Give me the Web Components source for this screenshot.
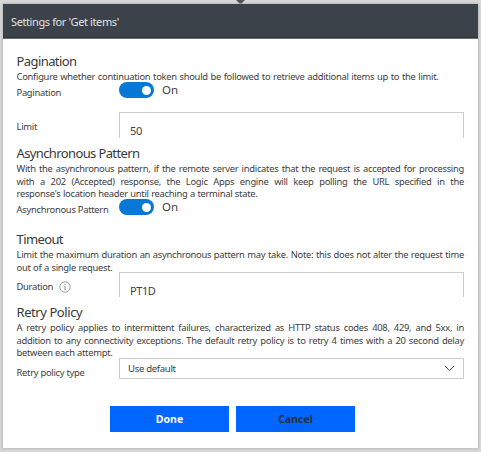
<!DOCTYPE html>
<html lang="en"><head><meta charset="utf-8"><title>Settings for 'Get items'</title>
<style>
html,body{margin:0;height:100%;overflow:hidden}
body{background:#d8d8d8;color:#404040;font-family:"Noto Sans","Open Sans",sans-serif}
text-line + field-row{margin-top:-1.6px}
</style></head><body>
<settings-dialog heading="Settings for 'Get items'">
 <settings-section heading="Pagination" style="height:92px;--hs:-.58px">
  <text-line style="width:422px">Configure whether continuation token should be followed to retrieve additional items up to the limit.</text-line>
  <field-row label="Pagination" style="height:30px;--ly:10.5px"><toggle-switch></toggle-switch></field-row>
  <field-row label="Limit" style="height:26px;--ly:15px"><text-box>50</text-box></field-row>
 </settings-section>
 <settings-section heading="Asynchronous Pattern" style="height:86px;--hs:-.62px">
  <text-line>With the asynchronous pattern, if the remote server indicates that the request is accepted for processing</text-line>
  <text-line>with a 202 (Accepted) response, the Logic Apps engine will keep polling the URL specified in the</text-line>
  <text-line style="width:241px">response's location header until reaching a terminal state.</text-line>
  <field-row label="Asynchronous Pattern" style="height:17px;--ly:11px"><toggle-switch></toggle-switch></field-row>
 </settings-section>
 <settings-section heading="Timeout" style="height:73px;--hs:-.6px">
  <text-line>Limit the maximum duration an asynchronous pattern may take. Note: this does not alter the request time</text-line>
  <text-line style="width:96px">out of a single request.</text-line>
  <field-row label="Duration" info style="margin-top:-2.2px;height:25px;--ly:15px"><text-box style="height:25px">PT1D</text-box></field-row>
 </settings-section>
 <settings-section heading="Retry Policy" style="height:102px;--hs:-.43px">
  <text-line>A retry policy applies to intermittent failures, characterized as HTTP status codes 408, 429, and 5xx, in</text-line>
  <text-line>addition to any connectivity exceptions. The default retry policy is to retry 4 times with a 20 second delay</text-line>
  <text-line style="width:96px">between each attempt.</text-line>
  <field-row label="Retry policy type" style="height:21px;--ly:14.5px"><select-box>Use default</select-box></field-row>
 </settings-section>
 <action-button slot="actions">Done</action-button>
 <action-button slot="actions" style="color:#2a3038">Cancel</action-button>
</settings-dialog>
<script>
const define=(name,html,setup)=>customElements.define(name,class extends HTMLElement{
  connectedCallback(){
    if(this.shadowRoot)return;
    this.attachShadow({mode:'open'}).innerHTML=html;
    if(setup)setup(this,this.shadowRoot);
  }
});
define('settings-dialog',`<style>
:host{display:block;position:relative;height:452px;box-sizing:border-box;padding:4px 3px}
.tip{position:absolute;left:236px;top:0}
.card{height:444px;background:#fff;box-shadow:0 0 2px 1px #bbb;display:flex;flex-direction:column}
header{height:35px;box-sizing:border-box;flex:none;background:#3b424a;color:#e0e2e4;border-bottom:1px solid #697079;box-shadow:inset 0 -1px #2e353d;padding-left:8px;font-size:11px;line-height:36px;letter-spacing:-.39px;white-space:nowrap}
main{padding:14px 14px 0 13.5px;flex:none}
footer{display:flex;gap:7px;padding-left:107px}
</style><svg class="tip" width="9" height="5"><path d="M0 0h9L5.5 3.5h-2z" fill="#555"/></svg>
<div class="card"><header></header><main><slot></slot></main><footer><slot name="actions"></slot></footer></div>`,
(h,r)=>r.querySelector('header').textContent=h.getAttribute('heading'));
define('settings-section',`<style>
:host{display:block}
h2{margin:0;height:18px;font-size:13px;font-weight:400;line-height:17px;letter-spacing:var(--hs);white-space:nowrap;color:#3a3a3a}
</style><h2></h2><slot></slot>`,(h,r)=>r.querySelector('h2').textContent=h.getAttribute('heading'));
define('text-line',`<style>
:host{display:block;height:12.6px;line-height:12.6px;font-size:9.4px;letter-spacing:-.28px;text-align:justify;text-align-last:justify;white-space:nowrap}
</style><slot></slot>`);
define('field-row',`<style>
:host{display:grid;grid-template-columns:102.5px 1fr;align-items:start}
.label{display:flex;align-items:center;gap:6px;height:12px;margin-top:calc(var(--ly) - 6px);font-size:9.4px;line-height:12px;letter-spacing:-.28px;white-space:nowrap}
</style><div class="label"><span></span></div><slot></slot>`,(h,r)=>{
  r.querySelector('span').textContent=h.getAttribute('label');
  if(h.hasAttribute('info'))r.querySelector('.label').insertAdjacentHTML('beforeend','<svg width="12" height="12" fill="none" stroke="#888"><circle cx="6" cy="6" r="5.2" stroke-width=".8"/><path d="M6 5v4M6 3v1" stroke-width="1"/></svg>');
});
define('toggle-switch',`<style>
:host{display:flex;align-items:center;gap:8px;height:16px;font-size:11.5px;line-height:16px;color:#404040}
i{width:35px;height:16px;box-sizing:border-box;border-radius:8px;background:#0878d7;padding:3.5px 3px 0 23px}
i::before{content:"";display:block;width:9px;height:9px;border-radius:50%;background:#fff}
</style><i></i><span>On</span>`);
define('text-box',`<style>
:host{display:block;height:26px;box-sizing:border-box;border:1px solid #ccc;border-bottom:0;padding:9px 0 0 10px;font-size:11px;line-height:18px;letter-spacing:-.4px;color:#404040}
</style><slot></slot>`);
define('select-box',`<style>
:host{display:flex;justify-content:space-between;align-items:center;height:21px;box-sizing:border-box;border:1px solid #ccc;padding:0 8px 0 8px;font-size:9.6px;letter-spacing:-.33px;color:#404040}
</style><span><slot></slot></span><svg width="11" height="7" fill="none" stroke="#444"><path d="M1 1l4.5 4.5L10 1"/></svg>`);
define('action-button',`<style>
:host{display:block;width:119px;height:25.5px;background:#06f;color:#fff;font-size:10.5px;font-weight:700;line-height:26px;text-align:center}
</style><slot></slot>`);
</script></body></html>
